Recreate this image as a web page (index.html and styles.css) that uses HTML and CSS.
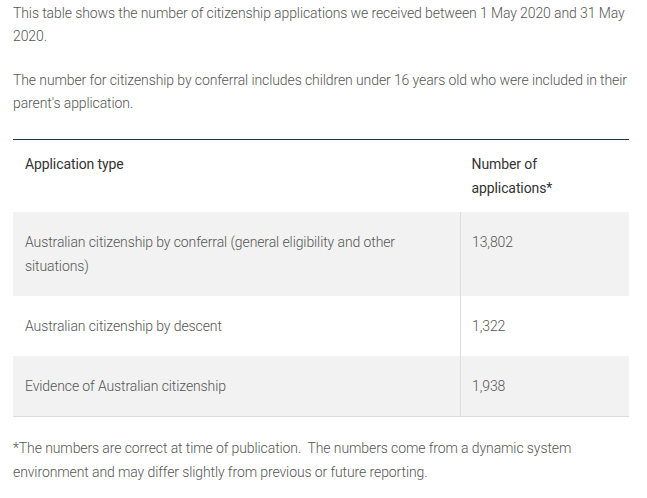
FILE: index.html
```html
<!DOCTYPE html>
<html>
<head>
<meta charset="utf-8">
<link rel="stylesheet" href="styles.css">
</head>
<body>
<div class="content">
  <p>This table shows the number of citizenship applications we received between 1 May 2020 and 31 May 2020.</p>
  <p>The number for citizenship by conferral includes children under 16 years old who were included in their parent's application.</p>
  <table class="data">
    <thead>
      <tr><th class="c1">Application type</th><th class="c2">Number of applications*</th></tr>
    </thead>
    <tbody>
      <tr class="shade"><td class="c1">Australian citizenship by conferral (general eligibility and other situations)</td><td class="c2">13,802</td></tr>
      <tr><td class="c1">Australian citizenship by descent</td><td class="c2">1,322</td></tr>
      <tr class="shade"><td class="c1">Evidence of Australian citizenship</td><td class="c2">1,938</td></tr>
    </tbody>
  </table>
  <p class="note">*The numbers are correct at time of publication.&nbsp; The numbers come from a dynamic system environment and may differ slightly from previous or future reporting.</p>
</div>
</body>
</html>
```
FILE: styles.css
```css
html, body {
  margin: 0;
  padding: 0;
  background: #ffffff;
}
body {
  font-family: Roboto, "Liberation Sans", sans-serif;
  font-weight: 300;
  font-size: 14px;
  line-height: 23px;
  letter-spacing: -0.1px;
  color: #555555;
}
.content {
  padding: 2px 10px 0 13px;
}
p {
  margin: 0 0 21px 0;
}
.data {
  width: 616px;
  border-collapse: collapse;
  margin: 24px 0 19px 0;
  border-top: 1px solid #1d3640;
  border-bottom: 1px solid #dcdcdc;
}
.data th {
  font-weight: 400;
  color: #333333;
  text-align: left;
  vertical-align: top;
  padding: 12px 12px 12px 12px;
  line-height: 24px;
}
.data td {
  vertical-align: top;
  padding: 18px 12px 18px 12px;
  line-height: 24px;
}
.data th.c1, .data td.c1 {
  width: 423px;
}
.data td.c2 {
  border-left: 1px solid #dcdcdc;
  padding-left: 11px;
}
.data th.c2 {
  padding-left: 11px;
}
.data tr.shade td {
  background: #f2f2f2;
}
.note {
  margin: 0;
  line-height: 24px;
}
```
